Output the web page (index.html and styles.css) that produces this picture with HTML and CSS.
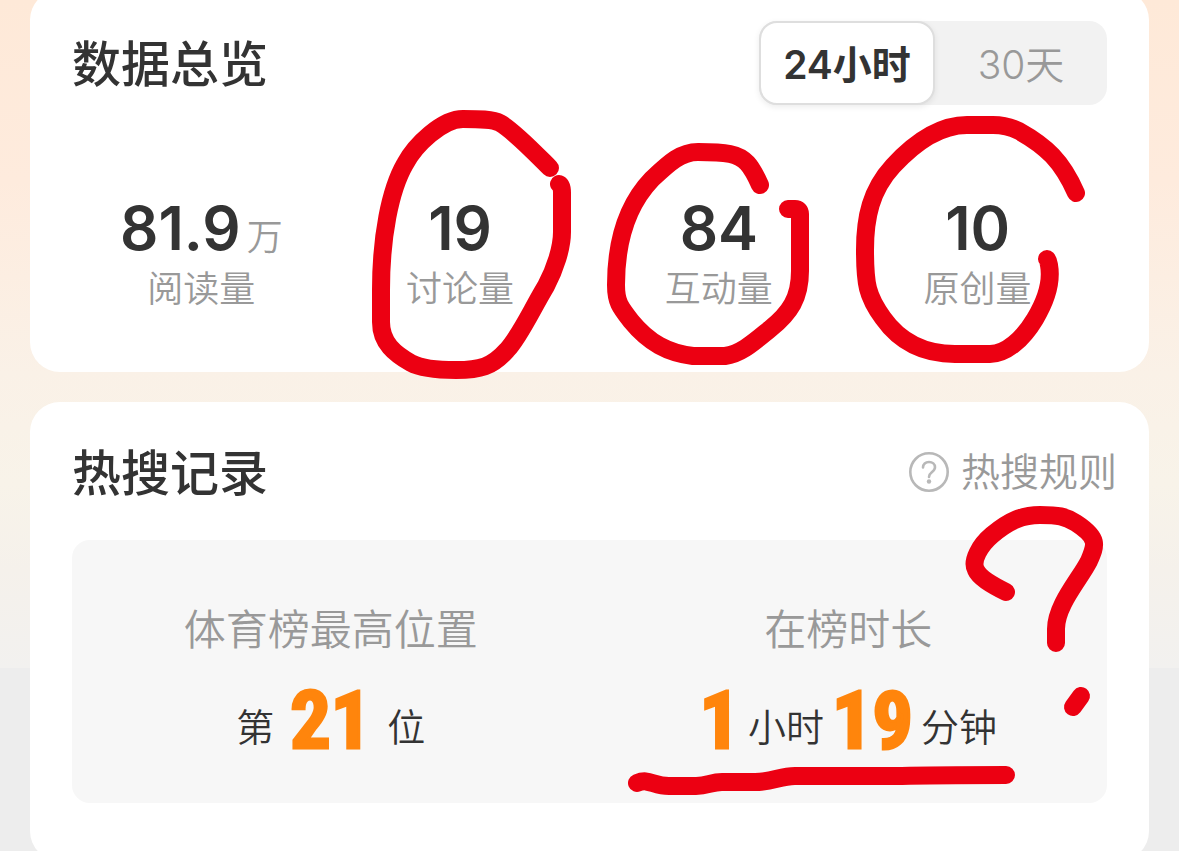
FILE: index.html
```html
<!DOCTYPE html>
<html lang="zh-CN">
<head>
    <meta charset="UTF-8">
    <meta name="viewport" content="width=device-width, initial-scale=1.0">
    <title>数据总览</title>
    <link rel="stylesheet" href="styles.css">
</head>
<body>
    <main class="page">
        <!-- 数据总览 -->
        <section class="card overview">
            <header class="card-header">
                <h2>数据总览</h2>
                <div class="range-switch">
                    <button type="button" class="range active">24小时</button>
                    <button type="button" class="range">30天</button>
                </div>
            </header>
            <div class="stats">
                <div class="stat">
                    <p class="stat-value">81.9<span class="unit">万</span></p>
                    <p class="stat-label">阅读量</p>
                </div>
                <div class="stat">
                    <p class="stat-value">19</p>
                    <p class="stat-label">讨论量</p>
                </div>
                <div class="stat">
                    <p class="stat-value">84</p>
                    <p class="stat-label">互动量</p>
                </div>
                <div class="stat">
                    <p class="stat-value">10</p>
                    <p class="stat-label">原创量</p>
                </div>
            </div>
        </section>

        <!-- 热搜记录 -->
        <section class="card record">
            <header class="card-header">
                <h2>热搜记录</h2>
                <a href="#" class="rules">
                    <svg class="help-icon" viewBox="0 0 40 40" aria-hidden="true">
                        <circle cx="20" cy="20" r="18.7"/>
                        <path d="M14 15.500C14 12 16.500 10 20 10s6 2.200 6 5.300c0 2.300-1.300 3.500-3.200 5C21 21.700 20 22.600 20 25"/>
                        <circle class="dot" cx="20" cy="29.500" r="2.200"/>
                    </svg>
                    热搜规则
                </a>
            </header>
            <div class="panel">
                <div class="record-item">
                    <p class="record-label">体育榜最高位置</p>
                    <p class="record-value rank">第<strong>21</strong>位</p>
                </div>
                <div class="record-item">
                    <p class="record-label">在榜时长</p>
                    <p class="record-value"><strong>1</strong>小时<strong>19</strong>分钟</p>
                </div>
            </div>
        </section>

        <!-- 红笔标记 -->
        <svg class="marks" viewBox="0 0 1179 851" aria-hidden="true">
            <path d="M550 168C534 152 514 131 500 123C493 119 478 119 463 119C442 119 415 145 405 164C390 190 381 237 381 290V322C381 343 395 354 411 363C422 369 440 370 456 370C480 370 492 367 507 350C520 336 531 311 546 286C555 269 562 248 562 232V193Q562 185 559 184"/>
            <path d="M760 185C751 165 745 157 730 154C720 152 708 152 698 152C681 152 670 162 652 179C629 203 616 238 616 285C616 302 620 307 631 321C649 343 668 353 693 356H725C741 354 754 342 770 329C790 313 800 298 800 271V214Q800 209 795 209H788"/>
            <path d="M1076 193C1062 161 1046 146 1019 131C1009 126 1001 125 993 125H967C943 125 917 140 893 166C871 190 865 217 865 250C865 284 867 296 883 318C900 342 925 354 955 354H990C1006 354 1023 339 1035 319C1047 299 1052 282 1049 265Q1048 260 1047 259"/>
            <path d="M1006 592C990 584 979 577 976 570C971 561 980 545 992 535C1010 520 1023 515 1040 515C1058 515 1065 516 1076 523C1099 538 1096 545 1089 561C1080 579 1056 605 1056 629V643"/>
            <path d="M1081 696L1073 707"/>
            <path d="M637 783C649 778 653 786 669 786H696C708 786 711 782 722 782H755C773 782 780 776 795 776H902C930 775 980 775 1006 775"/>
        </svg>
    </main>
</body>
</html>
```
FILE: styles.css
```css
* {
    box-sizing: border-box;
}

body {
    margin: 0;
    overflow: hidden;
    font-family: Inter, "Noto Sans CJK SC", sans-serif;
    color: #333333;
    background-color: #ededed;
    background-image: linear-gradient(#fee9d8 0, #feebdd 180px, #faf1e7 372px, #f8f3e9 484px, #f5f1eb 570px, #f2f1ef 668px, #ededed 668px);
    background-repeat: no-repeat;
}

h2,
p {
    margin: 0;
}

.page {
    position: relative;
    display: flex;
    flex-direction: column;
    gap: 30px;
    padding: 0 30px;
}

.card {
    padding: 0 42px;
    background-color: #ffffff;
    border-radius: 30px;
}

.overview {
    margin-top: -10px;
    padding-top: 31px;
    padding-bottom: 56px;
}

.record {
    padding-top: 28px;
    padding-bottom: 58px;
}

.card-header {
    display: flex;
    justify-content: space-between;
    align-items: center;
    height: 84px;
}

h2 {
    padding-top: 4px;
    font-size: 49px;
    font-weight: 500;
    line-height: 84px;
}

/* 时间范围切换 */
.range-switch {
    display: flex;
    width: 348px;
    height: 84px;
    background-color: #f2f2f2;
    border-radius: 18px;
}

.range {
    flex: 1;
    padding: 4px 0 0;
    border: 0;
    border-radius: 18px;
    background: none;
    font-family: inherit;
    font-size: 39px;
    font-weight: 350;
    line-height: 76px;
    color: #999999;
    cursor: pointer;
}

.range.active {
    background-color: #ffffff;
    border: 2px solid #dedede;
    box-shadow: 0 2px 6px rgba(0, 0, 0, 0.08);
    font-weight: 600;
    color: #333333;
}

/* 数据统计 */
.stats {
    display: grid;
    grid-template-columns: repeat(4, 1fr);
    margin-top: 88px;
    text-align: center;
}

.stat-value {
    font-size: 60px;
    font-weight: 600;
    line-height: 70px;
}

.unit {
    margin-left: 6px;
    font-size: 36px;
    font-weight: 350;
    line-height: 1;
    color: #999999;
}

.stat-label {
    font-size: 36px;
    font-weight: 350;
    line-height: 53px;
    color: #999999;
}

/* 热搜规则 */
.rules {
    display: flex;
    align-items: center;
    gap: 12px;
    margin-right: -10px;
    font-size: 39px;
    font-weight: 350;
    line-height: 84px;
    color: #999999;
    text-decoration: none;
}

.help-icon {
    width: 40px;
    height: 40px;
    fill: none;
    stroke: #b8b8b8;
    stroke-width: 2.6;
    stroke-linecap: round;
}

.help-icon .dot {
    fill: #b8b8b8;
    stroke: none;
}

.panel {
    display: grid;
    grid-template-columns: repeat(2, 1fr);
    margin-top: 26px;
    padding: 58px 0 40px;
    background-color: #f7f7f7;
    border-radius: 18px;
    text-align: center;
}

.record-label {
    font-size: 42px;
    font-weight: 350;
    line-height: 64px;
    color: #999999;
}

.record-value {
    display: flex;
    justify-content: center;
    align-items: flex-end;
    gap: 8px;
    margin-top: 17px;
    font-size: 38px;
    font-weight: 350;
    line-height: 72px;
}

.record-value strong {
    font-family: "Roboto Condensed", "Liberation Sans", sans-serif;
    font-size: 80px;
    font-weight: 700;
    line-height: 84px;
    color: #ff850c;
    -webkit-text-stroke: 3px #ff850c;
}

.rank {
    gap: 16px;
}

/* 红笔标记 */
.marks {
    position: absolute;
    top: 0;
    left: 0;
    width: 100%;
    fill: none;
    stroke: #ec0012;
    stroke-width: 18;
    stroke-linecap: round;
    stroke-linejoin: round;
    pointer-events: none;
}
```
